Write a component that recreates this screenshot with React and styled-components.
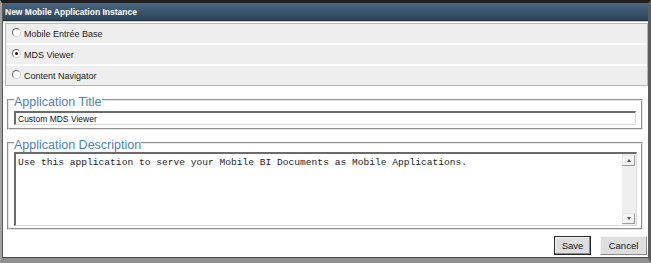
import styled, { createGlobalStyle } from "styled-components";

const GlobalStyle = createGlobalStyle`
  html, body {
    margin: 0;
    padding: 0;
    background: #ffffff;
  }
  * {
    box-sizing: border-box;
  }
`;

const Window = styled.div`
  width: 651px;
  height: 263px;
  display: flex;
  flex-direction: column;
  border-top: 3px solid #1e1e1e;
  border-left: 2px solid #a2a2a2;
  border-right: 3px solid #5c5c5c;
  border-bottom: 5px solid #8f8f8f;
  font-family: Arial, "Liberation Sans", sans-serif;
  overflow: hidden;
`;

const Inner = styled.div`
  flex: 1;
  display: flex;
  flex-direction: column;
  background: #ffffff;
  border-left: 1px solid #5a5a5a;
  border-bottom: 1px solid #4a4a4a;
`;

const TitleBar = styled.div`
  height: 18px;
  flex-shrink: 0;
  display: flex;
  align-items: center;
  padding-left: 2px;
  background: linear-gradient(to bottom, #4a6681, #2c445a);
  color: #ffffff;
  font-weight: bold;
  font-size: 8.5px;
  border-bottom: 1px solid #1f2f3e;
`;

const Body = styled.div`
  flex: 1;
  display: flex;
  flex-direction: column;
  padding: 1px 0 0 2px;
  border-top: 1px solid #c9c9c9;
`;

const ChoicePanel = styled.div`
  display: flex;
  flex-direction: column;
  flex-shrink: 0;
  background: #eeeeee;
  border: 1px solid #b8b8b8;
  height: 63px;
`;

const ChoiceRow = styled.label`
  height: ${(p) => (p.first ? "19px" : "21px")};
  display: flex;
  align-items: center;
  gap: 3px;
  padding-left: 6px;
  font-size: 9px;
  color: #1a1a1a;
  border-top: ${(p) => (p.first ? "none" : "2px solid #fbfbfb")};
`;

const Radio = styled.span`
  width: 9px;
  height: 9px;
  border-radius: 50%;
  background: #ffffff;
  border: 1px solid;
  border-color: #6f6f6f #d6d6d6 #d6d6d6 #6f6f6f;
  display: flex;
  align-items: center;
  justify-content: center;
  margin-top: -2px;

  &::after {
    content: "";
    width: 3px;
    height: 3px;
    border-radius: 50%;
    background: ${(p) => (p.checked ? "#111" : "transparent")};
  }
`;

const Group = styled.fieldset`
  margin: ${(p) => p.top}px 5px 0 2px;
  padding: 0 5px ${(p) => p.bottom}px 5px;
  border: 2px groove #e4e4e4;
  min-width: 0;
  flex-shrink: 0;
`;

const Legend = styled.legend`
  padding: 4px 0 0 0;
  font-size: 12.5px;
  line-height: 14px;
  color: #4f7fb6;
`;

const TextInput = styled.input`
  display: block;
  width: 100%;
  height: 14px;
  margin-top: 2px;
  padding: 0 2px;
  border-style: solid;
  border-width: 2px 1px 1px 2px;
  border-color: #6b6b6b #dadada #dadada #6b6b6b;
  font-family: Arial, "Liberation Sans", sans-serif;
  font-size: 8.5px;
  color: #111;
  outline: none;
  background: #fff;
`;

const TextBox = styled.div`
  display: flex;
  height: 74px;
  margin-right: -1px;
  border-style: solid;
  border-width: 2px 1px 1px 2px;
  border-color: #6b6b6b #dadada #dadada #6b6b6b;
  background: #fff;
`;

const TextArea = styled.textarea`
  flex: 1;
  border: none;
  resize: none;
  outline: none;
  padding: 3px 2px;
  overflow: hidden;
  font-family: "Courier New", "Liberation Mono", monospace;
  font-size: 9.6px;
  line-height: 11px;
  color: #222;
`;

const ScrollBar = styled.div`
  width: 14px;
  display: flex;
  flex-direction: column;
  justify-content: space-between;
  background: #efefef;
  padding: 1px 1px 1px 0;
`;

const ScrollButton = styled.div`
  height: 11px;
  display: flex;
  align-items: center;
  justify-content: center;
  background: #f3f3f3;
  border: 1px solid;
  border-color: #e8e8e8 #9a9a9a #9a9a9a #e8e8e8;

  &::after {
    content: "";
    border-left: 2px solid transparent;
    border-right: 2px solid transparent;
    ${(p) => (p.down ? "border-top: 3px solid #555;" : "border-bottom: 3px solid #555;")}
  }
`;

const Footer = styled.div`
  display: flex;
  justify-content: flex-end;
  gap: 9px;
  padding: 6px 1px 0 0;
`;

const Button = styled.button`
  height: 19px;
  width: ${(p) => p.w}px;
  padding: 0;
  font-family: Arial, "Liberation Sans", sans-serif;
  font-size: 9.5px;
  color: #111;
  background: #dedede;
  border: 1px solid;
  border-color: ${(p) =>
    p.focused ? "#2a2a2a" : "#f4f4f4 #8a8a8a #8a8a8a #f4f4f4"};
  box-shadow: ${(p) => (p.focused ? "inset -1px -1px #8a8a8a, inset 1px 1px #f4f4f4" : "none")};
`;

export default function App() {
  return (
    <>
      <GlobalStyle />
      <Window>
        <Inner>
          <TitleBar>New Mobile Application Instance</TitleBar>
          <Body>
            <ChoicePanel>
              <ChoiceRow first>
                <Radio />
                Mobile Entrée Base
              </ChoiceRow>
              <ChoiceRow>
                <Radio checked />
                MDS Viewer
              </ChoiceRow>
              <ChoiceRow>
                <Radio />
                Content Navigator
              </ChoiceRow>
            </ChoicePanel>
            <Group top={5} bottom={3}>
              <Legend>Application Title</Legend>
              <TextInput defaultValue="Custom MDS Viewer" />
            </Group>
            <Group top={4} bottom={2}>
              <Legend>Application Description</Legend>
              <TextBox>
                <TextArea defaultValue="Use this application to serve your Mobile BI Documents as Mobile Applications." />
                <ScrollBar>
                  <ScrollButton />
                  <ScrollButton down />
                </ScrollBar>
              </TextBox>
            </Group>
            <Footer>
              <Button w={37} focused>Save</Button>
              <Button w={47}>Cancel</Button>
            </Footer>
          </Body>
        </Inner>
      </Window>
    </>
  );
}
